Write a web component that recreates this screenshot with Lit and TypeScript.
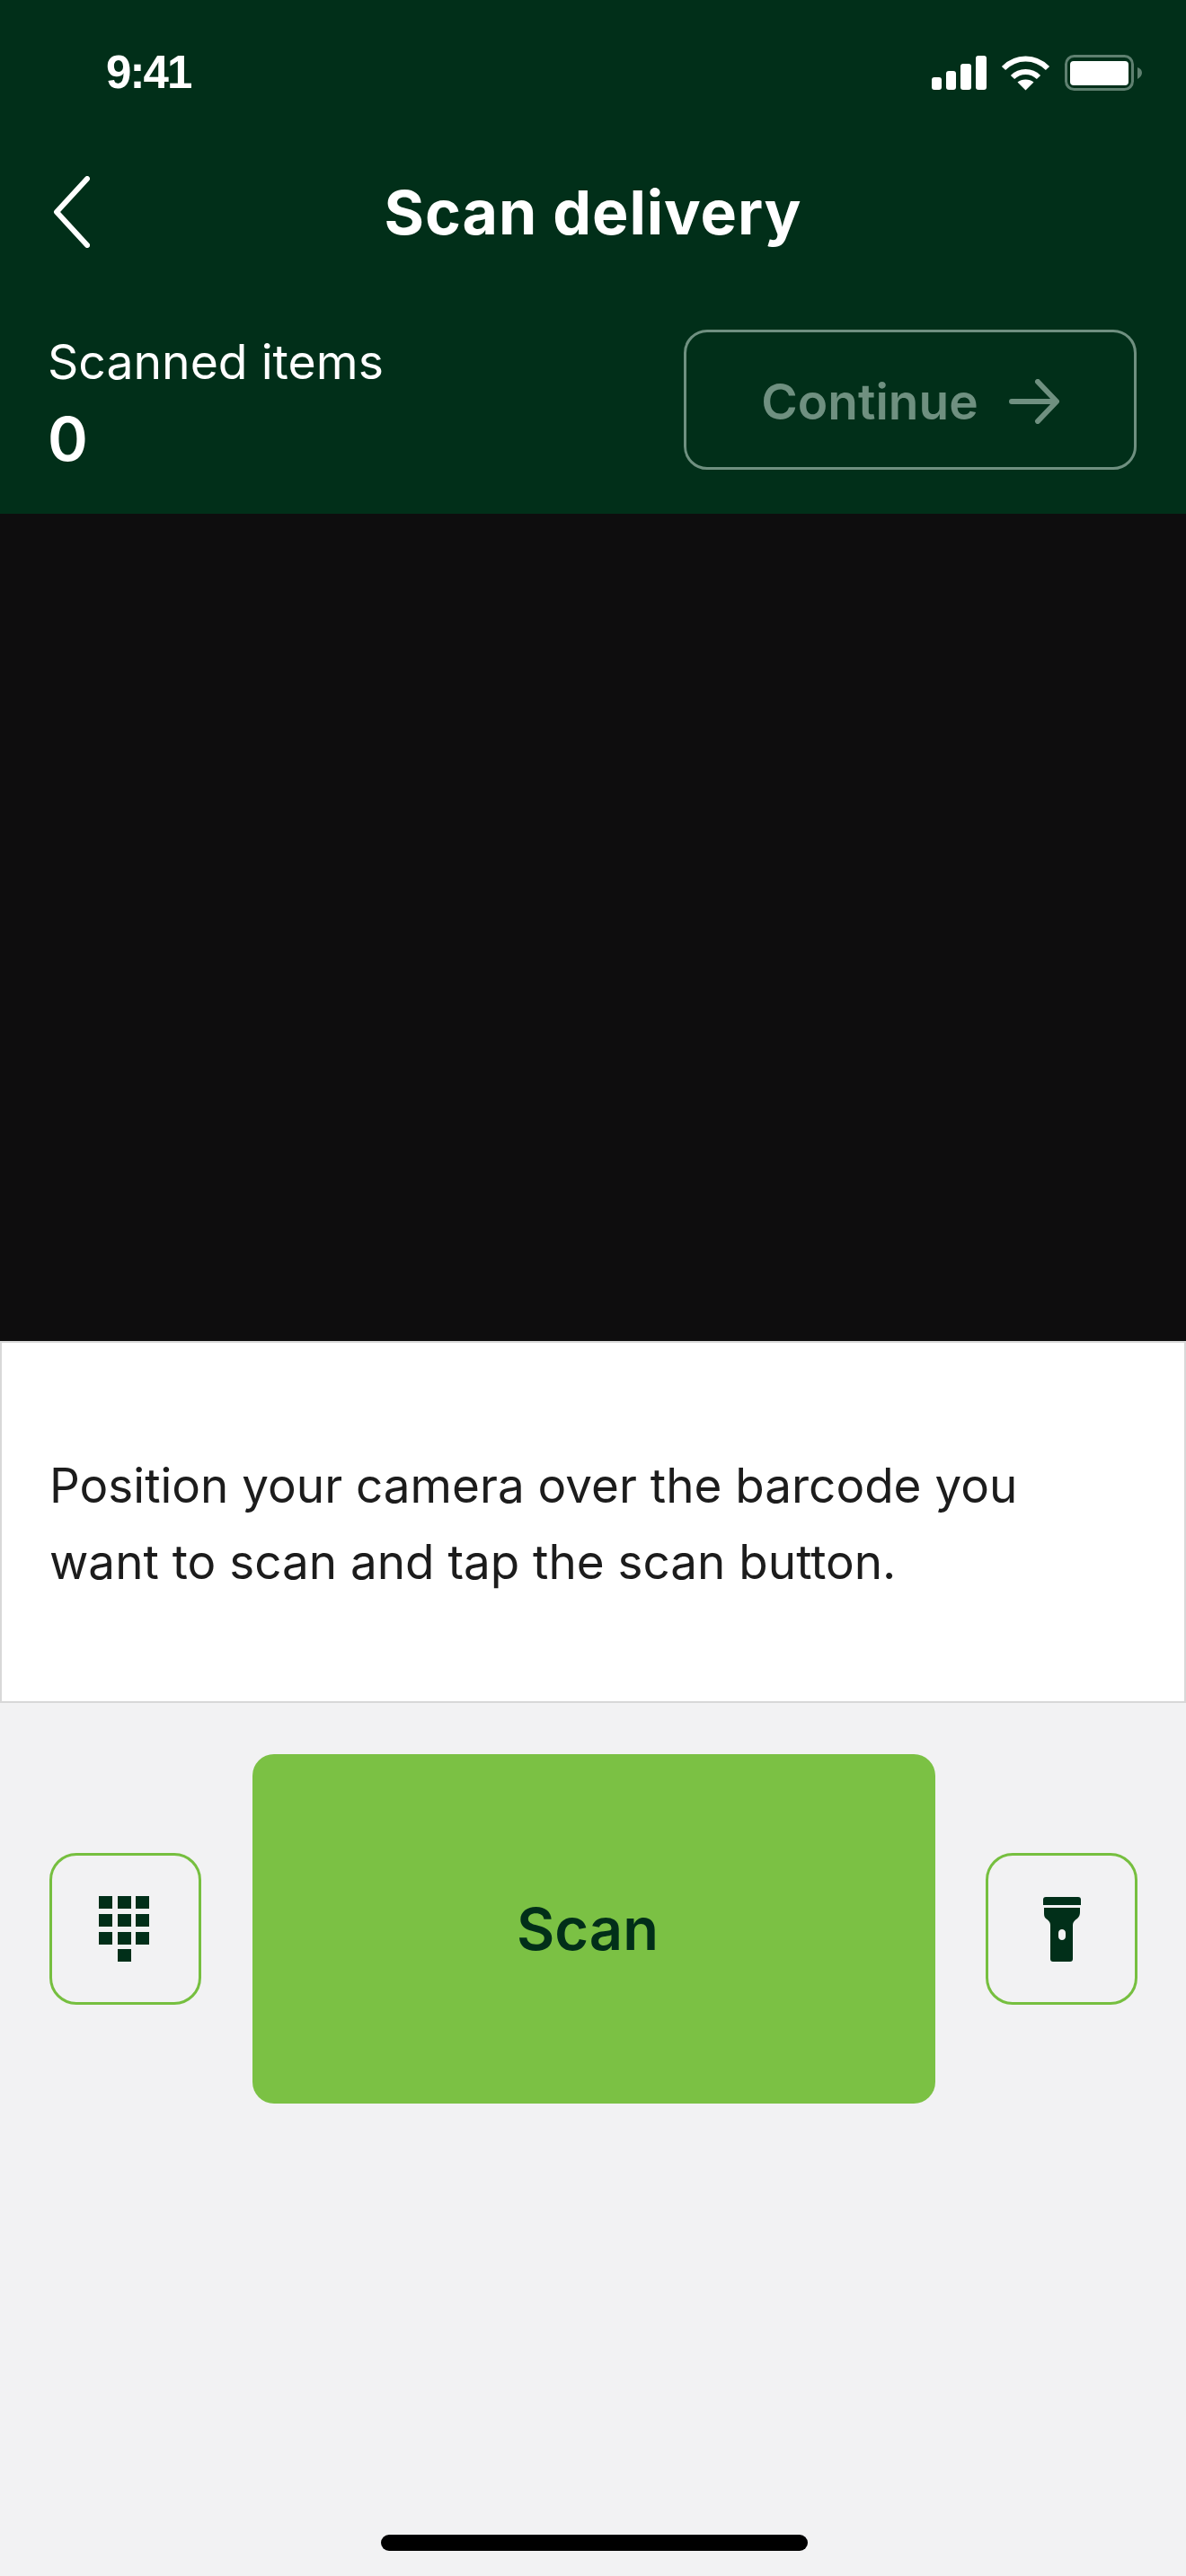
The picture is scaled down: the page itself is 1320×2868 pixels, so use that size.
import { html, css, LitElement } from "lit";
import { customElement } from "lit/decorators.js";

@customElement("app-root")
export class AppRoot extends LitElement {
  static styles = css`
    :host {
      display: flex;
      flex-direction: column;
      width: 1320px;
      height: 2868px;
      background: #f2f2f3;
      font-family: Inter, "Liberation Sans", sans-serif;
      overflow: hidden;
    }
    svg {
      display: block;
      flex: none;
    }

    .header {
      height: 572px;
      box-sizing: border-box;
      background: #012f19;
      color: #fff;
      display: flex;
      flex-direction: column;
    }

    .status {
      display: flex;
      align-items: center;
      justify-content: space-between;
      height: 40px;
      margin-top: 61px;
      padding: 0 49px 0 118px;
    }
    .time {
      font-family: "Liberation Sans", Arial, sans-serif;
      font-weight: 700;
      font-size: 51px;
      letter-spacing: -1.9px;
      line-height: 40px;
    }
    .status-icons {
      display: flex;
      align-items: center;
      gap: 16px;
    }

    .nav {
      display: grid;
      grid-template-columns: 1fr auto 1fr;
      align-items: center;
      height: 100px;
      margin-top: 85px;
      padding: 0 58px;
    }
    .title {
      font-weight: 700;
      font-size: 68px;
      letter-spacing: 0.9px;
      line-height: 100px;
    }

    .summary {
      display: flex;
      justify-content: space-between;
      align-items: flex-start;
      padding: 81px 55px 0 53px;
    }
    .count-label {
      font-size: 53.5px;
      line-height: 72px;
    }
    .count {
      margin-top: 11px;
      font-weight: 600;
      font-size: 68px;
      line-height: 76px;
    }
    .continue {
      display: flex;
      align-items: center;
      justify-content: center;
      gap: 34px;
      width: 504px;
      height: 156px;
      box-sizing: border-box;
      padding-top: 3px;
      border: 3px solid #6f9080;
      border-radius: 26px;
      color: #6f9080;
      font-weight: 600;
      font-size: 55px;
    }

    .camera {
      height: 921px;
      background: #0e0d0e;
    }

    .hint {
      box-sizing: border-box;
      height: 403px;
      background: #fff;
      border: 2px solid #d8d8d8;
      padding: 117px 53px 0;
      color: #1c1c1c;
      font-size: 53px;
      line-height: 85px;
    }

    .actions {
      display: flex;
      align-items: center;
      justify-content: space-between;
      padding: 57px 54px 0 55px;
    }
    .square {
      display: flex;
      align-items: center;
      justify-content: center;
      width: 169px;
      height: 169px;
      box-sizing: border-box;
      border: 3px solid #76bf3f;
      border-radius: 30px;
    }
    .square.keypad {
      padding-right: 3px;
    }
    .scan {
      display: flex;
      align-items: center;
      justify-content: center;
      width: 760px;
      height: 389px;
      box-sizing: border-box;
      padding-right: 13px;
      background: #7bc144;
      border-radius: 24px;
      color: #012f19;
      font-weight: 600;
      font-size: 65px;
    }

    .home {
      width: 475px;
      height: 18px;
      margin: auto 0 28px 424px;
      border-radius: 9px;
      background: #000;
    }
  `;

  render() {
    return html`
      <div class="header">
        <div class="status">
          <span class="time">9:41</span>
          <div class="status-icons">
            <svg width="61" height="38" viewBox="0 0 61 38" fill="#fff">
              <rect x="0" y="24" width="11" height="14" rx="3" />
              <rect x="16" y="17" width="11" height="21" rx="3" />
              <rect x="32" y="9" width="12" height="29" rx="3" />
              <rect x="49" y="0" width="12" height="38" rx="3" />
            </svg>
            <svg width="55" height="40" viewBox="0 0 55 40" fill="none" stroke="#fff" stroke-width="6">
              <path d="M3 15 C17 1 38 1 52 15" />
              <path d="M13 25 C21 17 34 17 42 25" />
              <path d="M27.5 39.5 L18.5 30.5 C23 26.5 32 26.5 36.5 30.5 Z" fill="#fff" stroke="none" />
            </svg>
            <svg width="86" height="40" viewBox="0 0 86 40" fill="none">
              <rect x="1.5" y="1.5" width="74" height="37" rx="9" stroke="#5f8070" stroke-width="3" />
              <rect x="6" y="7" width="65" height="27" rx="4" fill="#fff" />
              <path d="M81 14 C84 15 86 17 86 20 C86 23 84 25 81 27 Z" fill="#5f8070" />
            </svg>
          </div>
        </div>

        <div class="nav">
          <svg width="42" height="80" viewBox="0 0 42 80" fill="none" stroke="#fff" stroke-width="6" stroke-linecap="round" stroke-linejoin="round">
            <path d="M39 3 L5 40 L39 77" />
          </svg>
          <div class="title">Scan delivery</div>
        </div>

        <div class="summary">
          <div>
            <div class="count-label">Scanned items</div>
            <div class="count">0</div>
          </div>
          <div class="continue">
            <span>Continue</span>
            <svg width="56" height="50" viewBox="0 0 56 50" fill="none" stroke="#6f9080" stroke-width="6" stroke-linecap="round" stroke-linejoin="round">
              <path d="M3 25 H52 M32 3 L53 25 L32 47" />
            </svg>
          </div>
        </div>
      </div>

      <div class="camera"></div>

      <div class="hint">
        Position your camera over the barcode you<br />want to scan and tap the scan button.
      </div>

      <div class="actions">
        <div class="square keypad">
          <svg width="56" height="73" viewBox="0 0 56 73" fill="#012f19">
            <path d="M0 0h15v14H0zM21 0h15v14H21zM41 0h15v14H41zM0 20h15v14H0zM21 20h15v14H21zM41 20h15v14H41zM0 40h15v14H0zM21 40h15v14H21zM21 59h15v14H21zM41 40h15v14H41z" />
          </svg>
        </div>
        <div class="scan">Scan</div>
        <div class="square">
          <svg width="42" height="72" viewBox="0 0 42 72" fill="#012f19">
            <path d="M3 0H39C41 0 42 1 42 3V9H0V3C0 1 1 0 3 0Z" />
            <path fill-rule="evenodd" d="M1 12H41V17C41 20 40 22 38 24C35 26 33 28 33 31V69C33 71 32 72 30 72H11C9 72 8 71 8 69V31C8 28 6 26 3 24C1 22 1 20 1 17ZM21 36C19 36 17 37.5 17 40V44C17 46.5 19 48 21 48C23 48 25 46.5 25 44V40C25 37.5 23 36 21 36Z" />
          </svg>
        </div>
      </div>

      <div class="home"></div>
    `;
  }
}
